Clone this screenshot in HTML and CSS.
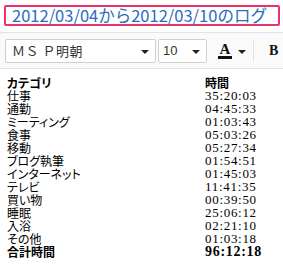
FILE: index.html
```html
<!DOCTYPE html>
<html lang="ja">
<head>
  <meta charset="UTF-8" />
  <title>ログ</title>
  <link rel="stylesheet" href="styles.css">
</head>
<body>

  <div class="title">2012/03/04から2012/03/10のログ</div>

  <div class="toolbar">
    <div class="select font-select">
      <span>ＭＳ Ｐ明朝</span>
      <span class="caret"></span>
    </div>
    <div class="select size-select">
      <span>10</span>
      <span class="caret"></span>
    </div>
    <div class="color-btn">
      <span class="color-a">A</span>
      <span class="caret"></span>
    </div>
    <div class="sep"></div>
    <div class="bold-btn">B</div>
  </div>

  <table class="log">
    <tr class="head"><td>カテゴリ</td><td>時間</td></tr>
    <tr><td>仕事</td><td class="time">35:20:03</td></tr>
    <tr><td>通勤</td><td class="time">04:45:33</td></tr>
    <tr><td>ミーティング</td><td class="time">01:03:43</td></tr>
    <tr><td>食事</td><td class="time">05:03:26</td></tr>
    <tr><td>移動</td><td class="time">05:27:34</td></tr>
    <tr><td>ブログ執筆</td><td class="time">01:54:51</td></tr>
    <tr><td>インターネット</td><td class="time">01:45:03</td></tr>
    <tr><td>テレビ</td><td class="time">11:41:35</td></tr>
    <tr><td>買い物</td><td class="time">00:39:50</td></tr>
    <tr><td>睡眠</td><td class="time">25:06:12</td></tr>
    <tr><td>入浴</td><td class="time">02:21:10</td></tr>
    <tr><td>その他</td><td class="time">01:03:18</td></tr>
    <tr class="total"><td>合計時間</td><td class="time">96:12:18</td></tr>
  </table>

</body>
</html>
```

FILE: styles.css
```css
body {
  margin: 0;
  font-family: "Noto Sans CJK JP", sans-serif;
  background: #fff;
  width: 283px;
  overflow: hidden;
}
.title {
  margin: 5px 3px 0 4px;
  height: 17px;
  border: 2px solid #e8336b;
  border-radius: 2px;
  color: #2a6cc0;
  font-size: 16.5px;
  line-height: 17px;
  padding-left: 6px;
  white-space: nowrap;
}
.toolbar {
  margin-top: 6px;
  height: 35px;
  border-top: 1px solid #dfe3ea;
  border-bottom: 1px solid #dfe3ea;
  background: #fafafa;
  display: flex;
  align-items: center;
  padding-left: 5px;
}
.select {
  height: 24px;
  border: 1px solid #cfcfcf;
  border-radius: 2px;
  background: #fff;
  display: flex;
  align-items: center;
  justify-content: space-between;
  padding: 0 6px 0 6px;
  box-sizing: border-box;
  font-size: 13px;
  color: #333;
}
.font-select {
  width: 151px;
  font-family: "Noto Sans CJK JP", sans-serif;
  letter-spacing: 0.5px;
}
.size-select {
  width: 49px;
  margin-left: 2px;
  padding-left: 4px;
  font-family: "Liberation Sans", sans-serif;
}
.caret {
  width: 0;
  height: 0;
  border-left: 4px solid transparent;
  border-right: 4px solid transparent;
  border-top: 4px solid #222;
  margin-top: 3px;
}
.color-btn {
  display: flex;
  align-items: center;
  margin-left: 11px;
  gap: 6px;
}
.color-a {
  font-family: "Liberation Serif", serif;
  font-weight: bold;
  font-size: 15px;
  line-height: 14px;
  width: 14px;
  text-align: center;
  border-bottom: 3px solid #111;
  color: #111;
}
.sep {
  width: 1px;
  height: 22px;
  background: #e2e2e2;
  margin-left: 7px;
}
.bold-btn {
  font-family: "Liberation Serif", serif;
  font-weight: bold;
  font-size: 14px;
  margin-left: 15px;
  color: #111;
}
.log {
  border-collapse: collapse;
  margin: 7px 0 0 7px;
  font-size: 12px;
  color: #000;
}
.log td {
  padding: 0;
  height: 13px;
  line-height: 13px;
  vertical-align: top;
  white-space: nowrap;
  font-feature-settings: "palt";
}
.log td:first-child {
  width: 198px;
}
.time {
  font-family: "Liberation Serif", serif;
  font-size: 13px;
  letter-spacing: 0.7px;
}
.head td, .total td {
  font-weight: bold;
}
.total .time {
  font-size: 14px;
}
```
